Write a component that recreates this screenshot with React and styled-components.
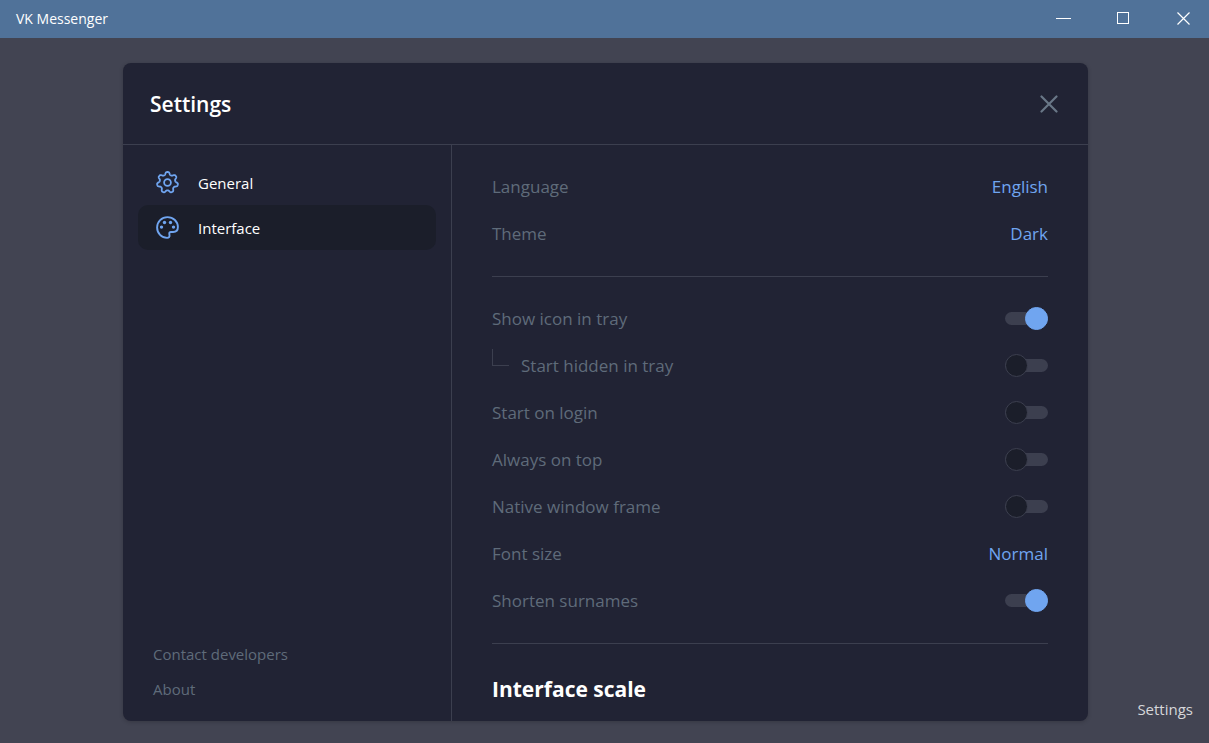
import React, { useState } from 'react';
import styled, { createGlobalStyle } from 'styled-components';

const GlobalStyle = createGlobalStyle`
  * {
    box-sizing: border-box;
  }

  body {
    background: #424452;
    font-family: 'Open Sans', 'Noto Sans', sans-serif;
    margin: 0;
  }

  button, select, input {
    font-family: inherit;
    margin: 0;
  }
`;

const StyledWindow = styled.div`
    display: flex;
    flex-direction: column;
    height: 100vh;
    overflow: hidden;
    position: relative;
`;

const StyledTitleBar = styled.header`
    background: #507299;
    color: #fff;
    display: flex;
    flex: none;
    font-size: 14px;
    height: 38px;
    justify-content: space-between;
    line-height: 37px;
    padding-left: 16px;
`;

const StyledWindowControls = styled.div`
    display: flex;
    gap: 8px;
`;

const StyledIconButton = styled.button`
    align-items: center;
    background: none;
    border: none;
    color: ${({ $color }) => $color || '#fff'};
    cursor: pointer;
    display: flex;
    justify-content: center;
    padding: 0;
    width: ${({ $width }) => $width}px;
`;

const StyledBackdrop = styled.main`
    display: flex;
    flex: 1;
    min-height: 0;
    padding: 25px 121px 22px 123px;
`;

const StyledModal = styled.section`
    background: #212334;
    border-radius: 8px;
    box-shadow: 0 1px 4px rgba(0, 0, 0, 0.2);
    display: flex;
    flex: 1;
    flex-direction: column;
    min-width: 0;
    overflow: hidden;
`;

const StyledModalHeader = styled.div`
    align-items: stretch;
    border-bottom: 1px solid #3c3f4f;
    display: flex;
    flex: none;
    height: 82px;
    justify-content: space-between;
    padding: 0 28px 0 27px;
`;

const StyledTitle = styled.h1`
    align-self: center;
    color: #fff;
    font-size: 21px;
    font-weight: 600;
    line-height: 28px;
    margin: 0;
`;

const StyledModalBody = styled.div`
    display: flex;
    flex: 1;
    min-height: 0;
`;

const StyledSidebar = styled.aside`
    border-right: 1px solid #3c3f4f;
    display: flex;
    flex: none;
    flex-direction: column;
    justify-content: space-between;
    padding: 15px 15px 14px;
    width: 329px;
`;

const StyledNav = styled.nav`
    display: flex;
    flex-direction: column;
`;

const StyledTab = styled.button`
    align-items: center;
    background: ${({ $active }) => ($active ? '#1b1e2a' : 'transparent')};
    border: none;
    border-radius: 10px;
    color: #fff;
    cursor: pointer;
    display: flex;
    font-size: 15px;
    font-weight: 500;
    gap: 18px;
    height: 45px;
    padding: 0 17px;

    svg {
        color: #70a5f0;
    }
`;

const StyledLinks = styled.div`
    display: flex;
    flex-direction: column;
    padding-left: 15px;
`;

const StyledLink = styled.a`
    color: #5f6b7a;
    font-size: 15px;
    line-height: 35px;
    text-decoration: none;
`;

const StyledContent = styled.div`
    flex: 1;
    min-width: 0;
    overflow: hidden;
    padding: 18px 40px;
`;

const StyledRow = styled.div`
    align-items: center;
    display: flex;
    height: 47px;
    justify-content: space-between;
`;

const StyledRowName = styled.div`
    align-self: stretch;
    align-items: center;
    display: flex;
    gap: 12px;
`;

const StyledLabel = styled.label`
    color: #5f6b7a;
    font-size: 17px;
    line-height: 24px;
`;

const StyledBranch = styled.span`
    align-self: flex-start;
    border-bottom: 1px solid #3c3f4f;
    border-left: 1px solid #3c3f4f;
    height: 17px;
    margin-top: 7px;
    width: 17px;
`;

const StyledDivider = styled.hr`
    border: none;
    border-top: 1px solid #3c3f4f;
    margin: 19px 0 18px;
`;

const StyledSelect = styled.select`
    appearance: none;
    background: #212334;
    border: none;
    color: #70a5f0;
    cursor: pointer;
    font-size: 17px;
    line-height: 24px;
    padding: 0;
    text-align-last: right;
`;

const StyledToggle = styled.input`
    align-items: center;
    appearance: none;
    background: #3c3f4f;
    border-radius: 7px;
    cursor: pointer;
    display: flex;
    height: 13px;
    width: 43px;

    &::before {
        background: #1b1e2a;
        border: 1px solid #3c3f4f;
        border-radius: 50%;
        box-sizing: border-box;
        content: '';
        flex: none;
        height: 23px;
        width: 23px;
    }

    &:checked::before {
        background: #70a5f0;
        border-color: #70a5f0;
        margin-left: auto;
    }
`;

const StyledSubtitle = styled.h2`
    color: #fff;
    font-size: 21px;
    font-weight: 700;
    line-height: 28px;
    margin: 0;
    padding-top: 13px;
`;

const StyledCaption = styled.span`
    bottom: 22px;
    color: #d6d7da;
    font-size: 15px;
    line-height: 24px;
    position: absolute;
    right: 16px;
`;

// outline of a cog with seven rounded teeth, centred in a 24px box
const cogPath = () => {
  const points = [];
  for (let i = 0; i < 210; i += 1) {
    const angle = (i / 210) * Math.PI * 2;
    const radius = 9.2 + 1.5 * Math.cos(7 * angle) - 0.2 * Math.cos(21 * angle);
    const x = 12 + radius * Math.sin(angle);
    const y = 12 - radius * Math.cos(angle);
    points.push(`${x.toFixed(2)} ${y.toFixed(2)}`);
  }
  return `M${points.join('L')}Z`;
};

const CogIcon = () => (
  <svg width="25" height="25" viewBox="-0.5 -0.5 25 25" fill="none" stroke="currentColor" strokeWidth="1.8" strokeLinejoin="round">
    <path d={cogPath()} />
    <circle cx="12" cy="12" r="3.4" />
  </svg>
);

const PaletteIcon = () => (
  <svg width="25" height="25" viewBox="-0.5 -0.5 25 25" fill="none" stroke="currentColor" strokeWidth="1.9" strokeLinejoin="round">
    <path d="M12 1.6C6.2 1.6 1.6 6.2 1.6 12S6.2 22.4 11.6 22.4C13.4 22.4 14.3 21.2 14 19.6L13.8 18.4C13.6 17.2 14.3 16.5 15.4 16.5H17.6C20.5 16.5 22.4 14.6 22.4 11.6C22.4 6 17.8 1.6 12 1.6Z" />
    <g fill="currentColor" stroke="none">
      <circle cx="9" cy="7" r="1.7" />
      <circle cx="15" cy="7" r="1.7" />
      <circle cx="6" cy="11.6" r="1.7" />
      <circle cx="18" cy="11.6" r="1.7" />
    </g>
  </svg>
);

const WindowControls = () => (
  <StyledWindowControls>
    <StyledIconButton type="button" aria-label="Minimize" $width={52}>
      <svg width="15" height="15" viewBox="0 0 15 15" stroke="currentColor"><path d="M0 6.5H15" /></svg>
    </StyledIconButton>
    <StyledIconButton type="button" aria-label="Maximize" $width={52}>
      <svg width="12" height="14" viewBox="0 0 12 14" fill="none" stroke="currentColor"><rect x="0.5" y="0.5" width="11" height="11" /></svg>
    </StyledIconButton>
    <StyledIconButton type="button" aria-label="Close" $width={52}>
      <svg width="13" height="14" viewBox="0 0 13 14" stroke="currentColor" strokeWidth="1.2"><path d="M0.5 0.5L12.5 12.5M12.5 0.5L0.5 12.5" /></svg>
    </StyledIconButton>
  </StyledWindowControls>
);

const SelectRow = ({ id, label, options }) => {
  const [value, setValue] = useState(options[0]);

  return (
    <StyledRow>
      <StyledLabel htmlFor={id}>{label}</StyledLabel>
      <StyledSelect id={id} value={value} onChange={(e) => setValue(e.currentTarget.value)}>
        {options.map((option) => <option key={option}>{option}</option>)}
      </StyledSelect>
    </StyledRow>
  );
};

const ToggleRow = ({ id, label, initial, nested }) => {
  const [checked, setChecked] = useState(Boolean(initial));

  return (
    <StyledRow>
      <StyledRowName>
        {nested && <StyledBranch />}
        <StyledLabel htmlFor={id}>{label}</StyledLabel>
      </StyledRowName>
      <StyledToggle
        id={id}
        type="checkbox"
        checked={checked}
        onChange={() => setChecked(!checked)}
      />
    </StyledRow>
  );
};

const tabs = [
  { name: 'General', Icon: CogIcon },
  { name: 'Interface', Icon: PaletteIcon },
];

const App = () => {
  const [activeTab, setActiveTab] = useState('Interface');

  return (
    <StyledWindow>
      <GlobalStyle />
      <StyledTitleBar>
        <span>VK Messenger</span>
        <WindowControls />
      </StyledTitleBar>
      <StyledBackdrop>
        <StyledModal>
          <StyledModalHeader>
            <StyledTitle>Settings</StyledTitle>
            <StyledIconButton type="button" aria-label="Close settings" $width={22} $color="#697787">
              <svg width="18" height="18" viewBox="0 0 18 18" stroke="currentColor" strokeWidth="2.2" strokeLinecap="round">
                <path d="M1.5 1.5L16.5 16.5M16.5 1.5L1.5 16.5" />
              </svg>
            </StyledIconButton>
          </StyledModalHeader>
          <StyledModalBody>
            <StyledSidebar>
              <StyledNav>
                {tabs.map(({ name, Icon }) => (
                  <StyledTab
                    key={name}
                    type="button"
                    $active={name === activeTab}
                    onClick={() => setActiveTab(name)}
                  >
                    <Icon />
                    {name}
                  </StyledTab>
                ))}
              </StyledNav>
              <StyledLinks>
                <StyledLink href="#contact">Contact developers</StyledLink>
                <StyledLink href="#about">About</StyledLink>
              </StyledLinks>
            </StyledSidebar>
            <StyledContent>
              <SelectRow id="language" label="Language" options={['English']} />
              <SelectRow id="theme" label="Theme" options={['Dark', 'Light']} />
              <StyledDivider />
              <ToggleRow id="tray" label="Show icon in tray" initial />
              <ToggleRow id="hidden" label="Start hidden in tray" nested />
              <ToggleRow id="login" label="Start on login" />
              <ToggleRow id="top" label="Always on top" />
              <ToggleRow id="frame" label="Native window frame" />
              <SelectRow id="font-size" label="Font size" options={['Normal', 'Large']} />
              <ToggleRow id="surnames" label="Shorten surnames" initial />
              <StyledDivider />
              <StyledSubtitle>Interface scale</StyledSubtitle>
            </StyledContent>
          </StyledModalBody>
        </StyledModal>
      </StyledBackdrop>
      <StyledCaption>Settings</StyledCaption>
    </StyledWindow>
  );
};

export default App;
